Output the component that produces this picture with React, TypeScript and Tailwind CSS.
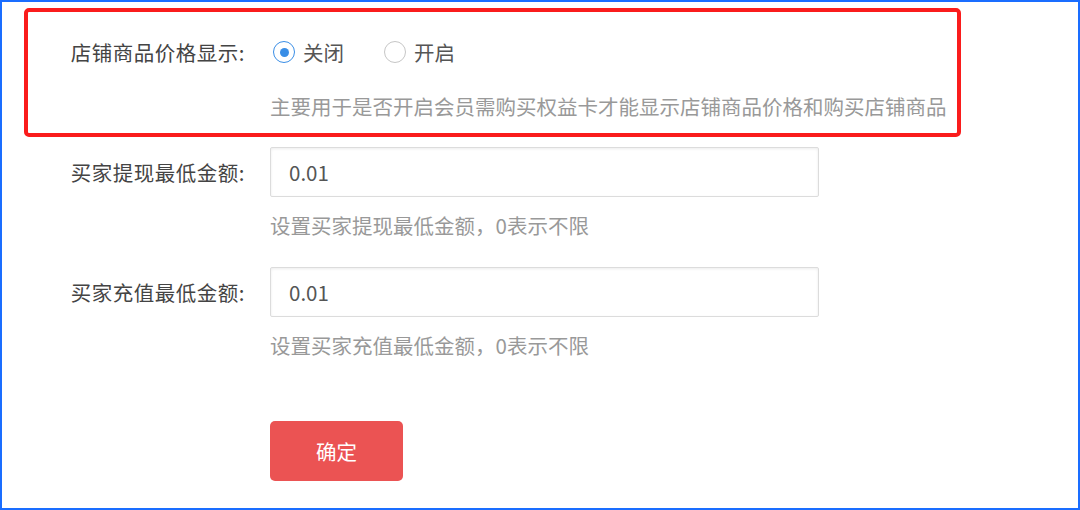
import React, { useState } from 'react';

const font = { fontFamily: '"Noto Sans CJK SC", "Noto Sans", sans-serif' };

function Radio({ checked, label, onClick }: { checked: boolean, label: string, onClick: () => void }) {
    return (
        <label onClick={onClick} className="flex items-center cursor-pointer">
            <span
                className={`flex items-center justify-center w-[22px] h-[22px] rounded-full border-[1.5px] bg-white ${checked ? 'border-[#3a8ee6]' : 'border-[#c6c6c6]'}`}
            >
                {checked && <span className="w-[9px] h-[9px] rounded-full bg-[#3a8ee6]" />}
            </span>
            <span className="ml-[8px] text-[20.5px] leading-[24px] text-[#555]">{label}</span>
        </label>
    );
}

function AmountRow({ label, value, hint, className = '' }: { label: string, value: string, hint: string, className?: string }) {
    return (
        <div className={`px-[4px] ${className}`}>
            <div className="flex items-center">
                <div className="w-[217px] text-right text-[20.5px] leading-[24px] tracking-[0.5px] text-[#444]">{label}:</div>
                <input
                    defaultValue={value}
                    className="ml-[25px] w-[549px] h-[50px] px-[18px] border border-[#dcdcdc] rounded-[2px] shadow-[inset_0_1px_3px_rgba(0,0,0,0.08)] text-[20.5px] text-[#555] outline-none"
                    style={font}
                />
            </div>
            <div className="ml-[242px] mt-[16px] text-[20.5px] leading-[24px] text-[#999]">{hint}</div>
        </div>
    );
}

export default function App() {
    const [showPrice, setShowPrice] = useState(false);

    return (
        <div className="w-[1080px] h-[510px] bg-white border-2 border-[#1a6dff] overflow-hidden" style={font}>
            <div className="ml-[22px] mt-[6px] w-[937px]">
                {/* highlighted setting */}
                <div className="border-4 border-[#fa1c1c] rounded-[5px] pt-[20px] pb-[15px]">
                    <div className="flex items-center h-[40px]">
                        <div className="w-[217px] text-right text-[20.5px] leading-[24px] tracking-[0.5px] text-[#444]">店铺商品价格显示:</div>
                        <div className="ml-[28px] flex items-center gap-[40px]">
                            <Radio checked={!showPrice} label="关闭" onClick={() => setShowPrice(false)} />
                            <Radio checked={showPrice} label="开启" onClick={() => setShowPrice(true)} />
                        </div>
                    </div>
                    <div className="ml-[242px] mt-[22px] text-[20.5px] leading-[24px] text-[#999]">
                        主要用于是否开启会员需购买权益卡才能显示店铺商品价格和购买店铺商品
                    </div>
                </div>

                <AmountRow className="mt-[10px]" label="买家提现最低金额" value="0.01" hint="设置买家提现最低金额，0表示不限" />
                <AmountRow className="mt-[30px]" label="买家充值最低金额" value="0.01" hint="设置买家充值最低金额，0表示不限" />

                <div className="px-[4px] mt-[64px]">
                    <button className="ml-[242px] w-[133px] h-[60px] rounded-[5px] bg-[#eb5353] text-white text-[20.5px]">
                        确定
                    </button>
                </div>
            </div>
        </div>
    );
}
